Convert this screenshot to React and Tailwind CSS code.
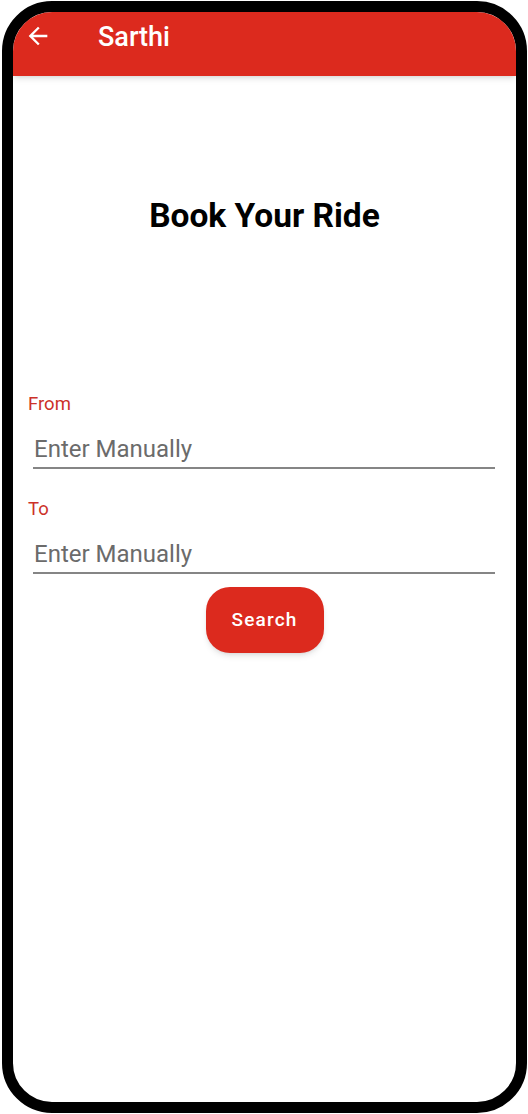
export default function App() {
    return (
        <div className="w-[528px] h-[1114px] bg-white pt-[1px] pl-[2px] pr-[1px] pb-[1px]" style={{ fontFamily: "Roboto, 'Noto Sans', sans-serif" }}>
            <div className="h-full border-[11px] border-black rounded-[50px] overflow-hidden bg-white flex flex-col">
                {/* app bar */}
                <div className="h-[64px] shrink-0 bg-[#dc2a1e] shadow-md flex items-start pt-[9px] pl-[11px]">
                    <svg width="28" height="28" viewBox="0 0 24 24" className="mt-[1px]">
                        <path fill="#fff" d="M20 11H7.83l5.59-5.59L12 4l-8 8 8 8 1.41-1.41L7.83 13H20v-2z" />
                    </svg>
                    <h1 className="ml-[46px] text-white text-[27px] leading-[32px] font-medium">Sarthi</h1>
                </div>

                <h2 className="mt-[120px] text-center text-[33.5px] leading-[40px] font-bold text-black">Book Your Ride</h2>

                <div className="mt-[156px] flex flex-col">
                    <label className="pl-[15px] text-[18.5px] leading-[24px] text-[#cc3129]">From</label>
                    <div className="mt-[17px] ml-[20px] mr-[21px]">
                        <div className="pl-[1px] text-[24px] leading-[32px] text-[#6b6b6b]">Enter Manually</div>
                        <div className="mt-[2px] h-[2px] bg-[#858585]"></div>
                    </div>

                    <label className="mt-[28px] pl-[15px] text-[18.5px] leading-[24px] text-[#cc3129]">To</label>
                    <div className="mt-[17px] ml-[20px] mr-[21px]">
                        <div className="pl-[1px] text-[24px] leading-[32px] text-[#6b6b6b]">Enter Manually</div>
                        <div className="mt-[2px] h-[2px] bg-[#858585]"></div>
                    </div>

                    <div className="mt-[13px] flex justify-center">
                        <button className="w-[118px] h-[66px] rounded-[24px] bg-[#dc2a1e] text-white text-[19px] font-medium tracking-[1.2px] shadow-md">Search</button>
                    </div>
                </div>
            </div>
        </div>
    )
}
